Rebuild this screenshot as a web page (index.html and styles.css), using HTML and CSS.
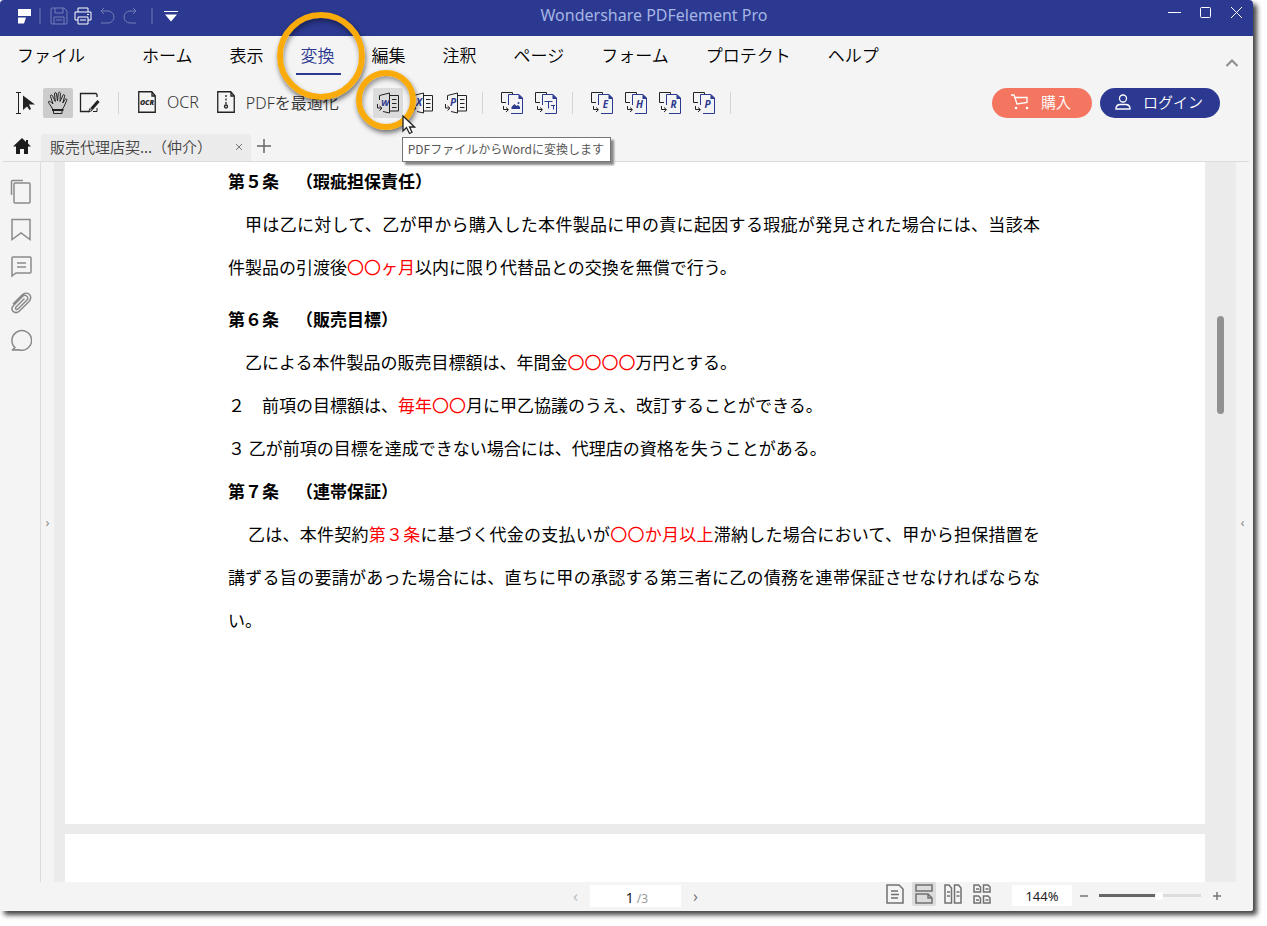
FILE: index.html
```html
<!DOCTYPE html>
<html lang="ja">
<head>
<meta charset="utf-8">
<title>Wondershare PDFelement Pro</title>
<link rel="stylesheet" href="styles.css">
</head>
<body>
<svg class="defs" aria-hidden="true">
  <symbol id="office" viewBox="0 0 24 24">
    <path d="M3.500 9V4.500L13.500 2v20L7 20.500M13.500 4.500h9v15.500h-9M16 8.500h4.500M16 12.500h4.500M16 16.500h4.500" />
    <path d="M1.500 13v4H5M3.500 15l2.500 2.200L3.500 19.500" />
  </symbol>
  <symbol id="export" viewBox="0 0 24 24">
    <path class="ink" d="M6 11.500H1.500V1.500h11V4M3.500 15v3.500H8M6 16.500l2.500 2.200L6 21" />
    <path class="blue" d="M8.500 14V3.500h10.500l3.500 3.500v15.500H11" />
    <path d="M18.500 3.500V8h4V7L19 3.500z" fill="#2b3990" stroke="none" />
  </symbol>
</svg>
<div class="app">
  <header class="titlebar">
    <div class="quick">
      <svg class="logo" width="14" height="16" viewBox="0 0 14 16"><path d="M1 1h13v7H1zM1 9.500h8l-2 6H1z" fill="#fff"/></svg>
      <span class="tsep"></span>
      <button class="tbtn dim" aria-label="保存"><svg width="18" height="18" viewBox="0 0 18 18"><path d="M1 2q0-1 1-1h12l3 3v12q0 1-1 1H2q-1 0-1-1zM5 1v5h8V1M4 17v-7h10v7M6 13h6"/></svg></button>
      <button class="tbtn" aria-label="印刷"><svg width="18" height="18" viewBox="0 0 18 18"><path d="M4 5V1h10v4M4 13H1V5h16v8h-3M4 10h10v7H4zM6 13h6M13 7.500h2"/></svg></button>
      <button class="tbtn dim" aria-label="元に戻す"><svg width="18" height="18" viewBox="0 0 18 18"><path d="M6 1L3 4l3 3M3 4h7a6 6 0 0 1 0 12H3"/></svg></button>
      <button class="tbtn dim" aria-label="やり直し"><svg width="18" height="18" viewBox="0 0 18 18"><path d="M11 1l3 3-3 3M14 4H8a6 6 0 0 0 0 12h6"/></svg></button>
      <span class="tsep"></span>
      <button class="tbtn" aria-label="クイックアクセス"><svg width="14" height="14" viewBox="0 0 14 14"><path d="M0 2.500h14"/><path d="M1 5.500h12l-6 7z" fill="#fff" stroke="none"/></svg></button>
    </div>
    <h1 class="title">Wondershare PDFelement Pro</h1>
    <div class="winctl">
      <button class="tbtn" aria-label="最小化"><svg width="13" height="13" viewBox="0 0 13 13"><path d="M0 6.500h13"/></svg></button>
      <button class="tbtn" aria-label="最大化"><svg width="13" height="13" viewBox="0 0 13 13"><rect x="1.500" y="1.500" width="10" height="10" rx="1"/></svg></button>
      <button class="tbtn" aria-label="閉じる"><svg width="13" height="13" viewBox="0 0 13 13"><path d="M1 1l11 11M12 1L1 12"/></svg></button>
    </div>
  </header>

  <nav class="menu">
    <button class="file">ファイル</button>
    <button>ホーム</button>
    <button>表示</button>
    <button class="active">変換<span class="ring ring-large"></span></button>
    <button>編集</button>
    <button>注釈</button>
    <button>ページ</button>
    <button>フォーム</button>
    <button>プロテクト</button>
    <button>ヘルプ</button>
    <button class="collapse" aria-label="リボンを折りたたむ"><svg width="14" height="10" viewBox="0 0 14 10"><path d="M1.500 8L7 2.500 12.500 8" fill="none" stroke="#8d8d8d" stroke-width="2"/></svg></button>
  </nav>

  <div class="toolbar">
    <div class="group modes">
      <button class="tool" aria-label="選択"><svg width="22" height="24" viewBox="0 0 22 24"><path d="M1 1.500h5M3.500 1.500v21M1 22.500h5" stroke-width="1"/><path d="M8 4.500v14.500l4-3.500 2.500 3.500 1.500-1-2-4.500h6z" fill="#222" stroke="none"/></svg></button>
      <button class="tool pressed" aria-label="手のひら"><svg width="22" height="24" viewBox="0 0 22 24"><g stroke-width="1"><path d="M5.500 18C4.500 15 1.500 12.500 1.500 11s2.500-.5 4.500 2L3.500 5.500c-.5-1.700 1.500-2.200 2-.6L8.300 10.500 7.500 3c-.1-1.800 1.900-1.900 2-.1l1 7.100.8-7.500c.2-1.800 2.200-1.600 2.100.2L13 10.500l2.800-6c.7-1.600 2.300-.9 1.800.8L15.800 12l2.200-3.500c.9-1.300 2.300-.4 1.700.9C18 13 17.500 15.500 15.500 18"/><path d="M6.500 20v2.500h8.500V20"/></g><path d="M5 19h11.500" stroke-width="2"/></svg></button>
      <button class="tool" aria-label="編集モード"><svg width="22" height="22" viewBox="0 0 22 22"><path d="M18 5V2.500L17 1.500H1.500v18H10"/><path d="M12.500 17l7-8" stroke-width="3"/><path d="M9.500 20l1.500-3.500 2 2zM14 19.500h4V16" stroke-width="1"/></svg></button>
    </div>
    <span class="sep sep-first"></span>
    <button class="wide"><svg width="18" height="22" viewBox="0 0 18 22"><path d="M.75.75h13l3.500 4v16.500H.75zM14 1v4h3"/><text x="9" y="14" font-size="7">OCR</text></svg>OCR</button>
    <button class="wide"><svg width="18" height="22" viewBox="0 0 18 22"><path d="M.75.75h13l3.500 4v16.500H.75zM14 1v4h3"/><path d="M9 4v9" stroke-dasharray="2 1.500"/><circle cx="9" cy="15.500" r="1.500"/></svg>PDFを最適化</button>
    <div class="group office">
      <div class="anchor">
        <button class="tool hover" aria-describedby="tip" aria-label="Wordへ"><svg width="24" height="24"><use href="#office"/><text class="letter" x="9" y="15" font-size="9">W</text></svg></button>
        <span class="ring ring-small"></span>
        <span class="tip" id="tip" role="tooltip">PDFファイルからWordに変換します</span>
        <svg class="cursor" width="14" height="20" viewBox="0 0 14 20"><path d="M1 1v15l3.500-3.500L7.500 18.500l2.500-1.200L7.500 12h5z" fill="#fff" stroke="#222"/></svg>
      </div>
      <button class="tool" aria-label="Excelへ"><svg width="24" height="24"><use href="#office"/><text class="letter" x="9" y="15" font-size="10">X</text></svg></button>
      <button class="tool" aria-label="PowerPointへ"><svg width="24" height="24"><use href="#office"/><text class="letter" x="9" y="15" font-size="10">P</text></svg></button>
    </div>
    <span class="sep"></span>
    <div class="group">
      <button class="tool" aria-label="画像へ"><svg width="24" height="24"><use href="#export"/><path d="M11.500 18v-2l3-3 2 2 1.500-1 2 2v2z" fill="#2b3990" stroke="none"/><circle cx="18.500" cy="12" r="1" fill="#2b3990" stroke="none"/></svg></button>
      <button class="tool" aria-label="テキストへ"><svg width="24" height="24"><use href="#export"/><path class="blue" stroke-width="1" d="M10.500 10.500h8M14.500 10.500v7M17 14.500h4M19.500 14.500v4"/></svg></button>
    </div>
    <span class="sep"></span>
    <div class="group">
      <button class="tool" aria-label="EPUBへ"><svg width="24" height="24"><use href="#export"/><text class="letter" x="15.500" y="17" font-size="10">E</text></svg></button>
      <button class="tool" aria-label="HTMLへ"><svg width="24" height="24"><use href="#export"/><text class="letter" x="15.500" y="17" font-size="10">H</text></svg></button>
      <button class="tool" aria-label="RTFへ"><svg width="24" height="24"><use href="#export"/><text class="letter" x="15.500" y="17" font-size="10">R</text></svg></button>
      <button class="tool" aria-label="PDF/Aへ"><svg width="24" height="24"><use href="#export"/><text class="letter" x="15.500" y="17" font-size="10">P</text></svg></button>
    </div>
    <span class="sep"></span>
    <div class="account">
      <button class="pill buy"><svg width="18" height="16" viewBox="0 0 18 16"><path d="M0 1h3l3 9 10-1.500V3.500H4"/><circle cx="5" cy="14" r="1.300" fill="#fff" stroke="none"/><circle cx="16" cy="14" r="1.300" fill="#fff" stroke="none"/></svg>購入</button>
      <button class="pill login"><svg width="16" height="16" viewBox="0 0 16 16"><circle cx="8" cy="4.500" r="3.500"/><path d="M1 15v-1.500q1-3 4-3h6q3 0 4 3V15z"/></svg>ログイン</button>
    </div>
  </div>

  <div class="tabs">
    <button class="home" aria-label="ホーム"><svg width="18" height="16" viewBox="0 0 18 16"><path d="M9 0L0 8.500h3V16h4v-5h4v5h4V8.500h3L15 5.500V2h-2v2z" fill="#1c1c1c"/></svg></button>
    <div class="tab"><span>販売代理店契...（仲介）</span><button aria-label="タブを閉じる"><svg width="8" height="8" viewBox="0 0 8 8"><path d="M1 1l6 6M7 1L1 7" stroke="#777"/></svg></button></div>
    <button class="add" aria-label="新しいタブ"><svg width="14" height="14" viewBox="0 0 14 14"><path d="M7 0v14M0 7h14" stroke="#666" stroke-width="1.500"/></svg></button>
  </div>

  <div class="body">
    <aside class="side">
      <button aria-label="サムネイル"><svg width="22" height="26" viewBox="0 0 22 26"><rect x="4" y="4" width="16" height="20" rx="1"/><path d="M1.500 16V2.500q0-1 1-1H13"/></svg></button>
      <button aria-label="しおり"><svg width="22" height="26" viewBox="0 0 22 26"><path d="M2 3.500h18v20L11 17l-9 6.500z"/></svg></button>
      <button aria-label="コメント"><svg width="22" height="26" viewBox="0 0 22 26"><path d="M2 23V5q0-1 1-1h17q1 0 1 1v14q0 1-1 1H6zM7 10h9M7 14h9"/></svg></button>
      <button aria-label="添付"><svg width="22" height="26" viewBox="0 0 22 26"><path d="M3 14l9-9c5-5 12 1 7 6.500L9.500 21C5 25-1 20 3.500 15.500l9-9c3-3 7 1 4.500 3.500l-9 9c-1.500 1.500-3.500-.5-2-2l8.500-8.500"/></svg></button>
      <button aria-label="検索"><svg width="22" height="26" viewBox="0 0 22 26"><path d="M5 20.500L2 23.500M5.500 21a9.800 9.800 0 1 1 3 1.700L2 23"/></svg></button>
    </aside>
    <button class="strip strip-left" aria-label="サイドバーを開く">›</button>
    <main class="pages">
      <article class="page first">
        <div class="doc">
          <h2>第５条　（瑕疵担保責任）</h2>
          <p>甲は乙に対して、乙が甲から購入した本件製品に甲の責に起因する瑕疵が発見された場合には、当該本件製品の引渡後<em>〇〇ヶ月</em>以内に限り代替品との交換を無償で行う。</p>
          <h2 class="spaced">第６条　（販売目標）</h2>
          <p>乙による本件製品の販売目標額は、年間金<em>〇〇〇〇</em>万円とする。</p>
          <p class="item">２　前項の目標額は、<em>毎年〇〇</em>月に甲乙協議のうえ、改訂することができる。</p>
          <p class="item">３ 乙が前項の目標を達成できない場合には、代理店の資格を失うことがある。</p>
          <h2>第７条　（連帯保証）</h2>
          <p class="deep">乙は、本件契約<em>第３条</em>に基づく代金の支払いが<em>〇〇か月以上</em>滞納した場合において、甲から担保措置を講ずる旨の要請があった場合には、直ちに甲の承認する第三者に乙の債務を連帯保証させなければならない。</p>
        </div>
      </article>
      <article class="page next"></article>
    </main>
    <div class="track"><div class="thumb"></div></div>
    <button class="strip strip-right" aria-label="パネルを開く">‹</button>
  </div>

  <footer class="status">
    <div class="pager">
      <button class="muted" aria-label="前のページ">‹</button>
      <label class="pagebox"><input type="text" value="1" aria-label="ページ番号"><span>/3</span></label>
      <button aria-label="次のページ">›</button>
    </div>
    <div class="view">
      <button class="vbtn" aria-label="単一ページ"><svg width="18" height="20" viewBox="0 0 18 20"><path d="M1 1h12l4 4v14H1zM5 7h7M5 10.500h8M5 14h7"/></svg></button>
      <button class="vbtn on" aria-label="連続表示"><svg width="18" height="20" viewBox="0 0 18 20"><path d="M1 1h16v6H1zM1 10h12l4 4v5H1zM13 10v4h4"/></svg></button>
      <button class="vbtn" aria-label="見開き"><svg width="18" height="20" viewBox="0 0 18 20"><path d="M1 1h4l2.500 3v15H1zM10.500 1h4L17 4v15h-6.500zM3 8h3M3 12h3M12.500 8h3M12.500 12h3"/></svg></button>
      <button class="vbtn" aria-label="見開き連続"><svg width="18" height="20" viewBox="0 0 18 20"><path d="M1 1h4.500l2 2v5H1zM10.500 1H15l2 2v5h-6.500zM1 12h4.500l2 2v5H1zM10.500 12H15l2 2v5h-6.500zM3 5h3M12.500 5h3M3 16h3M12.500 16h3"/></svg></button>
      <input class="zoombox" type="text" value="144%" aria-label="表示倍率">
      <button class="zbtn" aria-label="縮小"><svg width="8" height="8" viewBox="0 0 8 8"><path d="M0 4h8" stroke-width="1.500"/></svg></button>
      <input class="slider" type="range" min="0" max="100" value="60" aria-label="ズーム">
      <button class="zbtn" aria-label="拡大"><svg width="8" height="8" viewBox="0 0 8 8"><path d="M0 4h8M4 0v8" stroke-width="1.500"/></svg></button>
    </div>
  </footer>
</div>
</body>
</html>
```

FILE: styles.css
```css
* { box-sizing: border-box; }

body {
  min-height: 100vh;
  margin: 0;
  padding: 0 14px 15px 0;
  background: #fff;
  color: #222;
  font-family: "Noto Sans", "Noto Sans CJK JP", sans-serif;
  font-size: 16px;
}

button {
  margin: 0;
  padding: 0;
  border: 0;
  background: none;
  color: inherit;
  font: inherit;
  white-space: nowrap;
}

svg { display: block; fill: none; }
.defs { position: absolute; width: 0; height: 0; }

.app {
  display: flex;
  flex-direction: column;
  height: calc(100vh - 15px);
  background: #f4f4f4;
  border-radius: 4px 4px 2px 2px;
  box-shadow: 4px 4px 5px #444;
}

/* Title bar */
.titlebar {
  display: flex;
  flex: none;
  height: 36px;
  background: #2b3990;
  border-radius: 4px 4px 0 0;
}
.quick { display: flex; align-items: center; gap: 6px; height: 32px; padding-left: 17px; width: 187px; }
.logo { flex: none; margin-right: 2px; }
.tsep { width: 2px; height: 16px; margin-right: 5px; background: #4d5a9f; }
.tsep + .tbtn { margin-left: -2px; }
.quick .tsep:nth-of-type(2) { margin: 0 7px 0 5px; }
.tbtn svg { stroke: #fff; }
.tbtn.dim { opacity: .35; }
.title {
  flex: 1;
  margin: 0;
  color: #a5b5e4;
  font-size: 16px;
  font-weight: 400;
  line-height: 30px;
  text-align: center;
}
.winctl { display: flex; justify-content: flex-end; gap: 18px; height: 24px; padding-right: 10px; width: 132px; }

/* Menu */
.menu {
  display: flex;
  flex: none;
  align-items: stretch;
  gap: 37px;
  height: 39px;
  padding: 0 14px 0 17px;
  color: #000;
  font-family: "Noto Sans CJK JP", sans-serif;
  font-size: 17px;
  font-weight: 350;
}
.menu button { padding-bottom: 3px; }
.menu .file { margin-right: 20px; }
.menu .active { position: relative; color: #2b3990; }
.active::after {
  content: "";
  position: absolute;
  left: -5px;
  right: -6px;
  bottom: 0;
  height: 2px;
  background: #2b3990;
}
.menu .collapse { margin: 18px 0 0 auto; }

.ring {
  position: absolute;
  z-index: 3;
  border: 6px solid #f9ab0c;
  border-radius: 50%;
  box-shadow: 1px 3px 5px #0008, inset 1px 3px 5px #0006;
  pointer-events: none;
}
.ring-large { width: 88px; height: 88px; left: -24px; top: -24px; }
.ring-small { width: 60px; height: 60px; left: -17px; top: -18px; }

/* Toolbar */
.toolbar { display: flex; flex: none; align-items: center; height: 55px; padding: 0 33px 0 11px; }
.toolbar svg { flex: none; stroke: #222; stroke-width: 1.3; }
.toolbar use { stroke-width: 1; }
.group { display: flex; gap: 4px; }
.modes { gap: 2px; }
.tool { display: grid; place-items: center; width: 30px; height: 30px; border-radius: 2px; }
.pressed { background: #ccc; }
.hover { background: #dcdcdc; }
.sep { width: 1px; height: 22px; margin: 0 14px 0 11px; background: #d4d4d4; }
.sep-first { margin: 0 19px 0 13px; }
.wide { display: flex; align-items: center; gap: 11px; margin-right: 18px; padding-bottom: 2px; color: #333; font-weight: 350; }
.wide text, .letter {
  fill: #222;
  stroke: none;
  font-family: "Open Sans", sans-serif;
  font-style: italic;
  font-weight: 800;
  text-anchor: middle;
}
.toolbar .letter { fill: #2b3990; font-weight: 700; }
.ink { stroke: #222; }
.blue { stroke: #2b3990; }
.office { margin-left: 16px; }
.anchor { position: relative; }

.tip {
  position: absolute;
  z-index: 4;
  left: 29px;
  top: 49px;
  height: 25px;
  padding: 0 6px 0 5px;
  border: 1px solid #767676;
  background: #fff;
  box-shadow: 3px 3px 2px #888;
  color: #575757;
  font-family: "Noto Sans CJK JP", sans-serif;
  font-size: 12px;
  line-height: 22px;
  white-space: nowrap;
}
.cursor { position: absolute; z-index: 5; left: 29px; top: 27px; }

.account { display: flex; gap: 8px; margin-left: auto; font-size: 15px; font-family: "Noto Sans CJK JP", sans-serif; font-weight: 350; }
.pill { display: flex; align-items: center; justify-content: center; gap: 12px; height: 30px; padding: 0 2px 2px 0; border-radius: 15px; color: #fff; }
.pill svg { stroke: #fff; }
.buy { width: 100px; background: #f47560; }
.login { width: 120px; background: #2b3990; }

/* Document tabs */
.tabs {
  display: flex;
  flex: none;
  align-items: flex-end;
  height: 32px;
  margin: 0 4px 0 3px;
  border-bottom: 1px solid #dcdcdc;
}
.home { align-self: center; width: 38px; padding-left: 10px; }
.tab {
  display: flex;
  align-items: center;
  justify-content: space-between;
  width: 210px;
  height: 27px;
  padding: 0 8px 2px 9px;
  border-radius: 4px 4px 0 0;
  background: #ebebeb;
  color: #444;
  font-family: "Noto Sans CJK JP", sans-serif;
  font-size: 15px;
  font-weight: 350;
  text-spacing-trim: space-all;
}
.add { align-self: center; padding-left: 6px; }

/* Work area */
.body { display: flex; flex: 1; min-height: 0; }
.side {
  display: flex;
  flex: none;
  flex-direction: column;
  align-items: center;
  gap: 11px;
  width: 41px;
  padding: 17px 0 0 2px;
  border-right: 1px solid #dcdcdc;
}
.side svg { stroke: #8a8a8a; stroke-width: 1.5; }
.strip { flex: none; color: #888; font-size: 13px; }
.strip-left { width: 13px; }
.strip-right { width: 17px; padding-right: 4px; }
.pages {
  display: flex;
  flex: 1;
  flex-direction: column;
  gap: 10px;
  min-width: 0;
  padding-left: 11px;
  background: #ebebeb;
}
.page { background: #fff; }
.first { flex: 1; min-height: 0; overflow: hidden; }
.next { flex: none; height: 48px; }

.doc {
  margin-top: -3px;
  padding: 0 165px 0 163px;
  color: #000;
  font-family: "Noto Sans CJK JP", sans-serif;
  font-size: 17px;
  line-height: 43px;
  text-align: justify;
  text-spacing-trim: space-all;
}
.doc h2 { margin: 0; font-size: 17px; font-weight: 700; }
.doc .spaced { margin-top: 9px; }
.doc p { margin: 0; text-indent: 17px; }
.doc .item { text-indent: 0; }
.doc .deep { text-indent: 20px; }
.doc em { color: #f00; font-style: normal; }

.track { flex: none; width: 31px; padding: 154px 12px 0; background: #ebebeb; }
.thumb { height: 98px; border-radius: 4px; background: #919191; }

/* Status bar */
.status {
  display: grid;
  flex: none;
  grid-template-columns: 1fr auto auto;
  align-items: start;
  height: 29px;
  padding: 0 32px 0 20px;
}
.pager { display: flex; grid-column: 2; align-items: center; gap: 12px; padding-top: 3px; margin-right: 185px; color: #777; }
.pager .muted { color: #bbb; }
.pager button { line-height: 20px; }
.pagebox {
  display: flex;
  align-items: baseline;
  gap: 3px;
  width: 91px;
  height: 22px;
  padding-right: 33px;
  background: #fff;
  color: #999;
  font-size: 12px;
  line-height: 26px;
}
.pagebox input {
  flex: 1;
  min-width: 0;
  padding: 0;
  border: 0;
  background: none;
  color: #222;
  font: inherit;
  font-size: 14px;
  text-align: right;
}
.view { display: flex; justify-self: end; align-items: center; gap: 5px; height: 24px; }
.vbtn { display: grid; place-items: center; width: 24px; height: 24px; border-radius: 2px; }
.vbtn svg { stroke: #707070; stroke-width: 1.5; }
.on { background: #dcdcdc; }
.zoombox {
  width: 60px;
  height: 21px;
  margin: 3px 3px 0 13px;
  padding: 0;
  border: 0;
  border-radius: 2px;
  background: #fff;
  color: #222;
  font-family: "Noto Sans", sans-serif;
  font-size: 13px;
  text-align: center;
}
.zbtn { padding-top: 3px; }
.zbtn svg { stroke: #777; }
.slider {
  width: 102px;
  height: 10px;
  margin: 3px 7px 0 6px;
  appearance: none;
  background: linear-gradient(to right, #666 60%, #dcdcdc 60%) center / 100% 3px no-repeat;
}
.slider::-webkit-slider-thumb { appearance: none; width: 8px; height: 8px; border-radius: 50%; background: #fff; }
```
